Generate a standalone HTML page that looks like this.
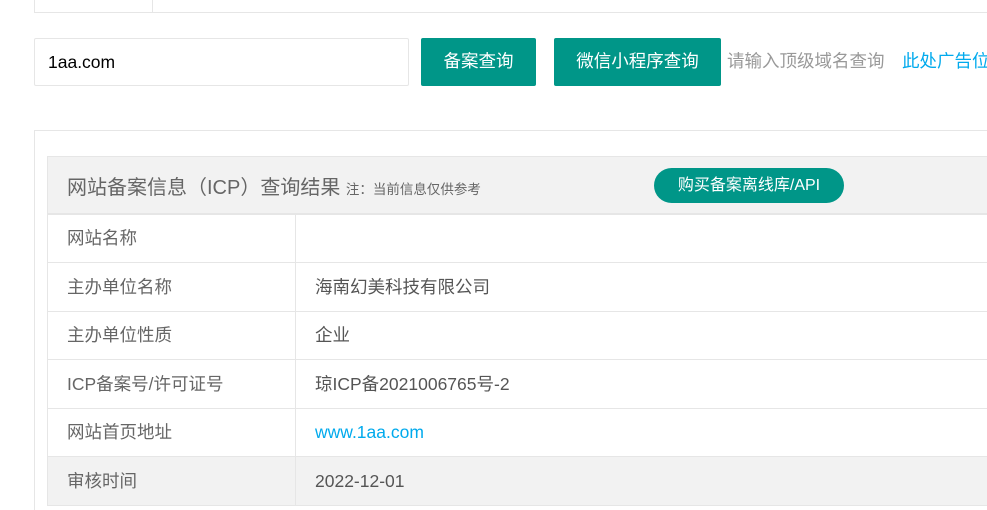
<!DOCTYPE html>
<html><head><meta charset="utf-8"><style>
*{margin:0;padding:0;box-sizing:border-box}
html,body{width:987px;height:510px;overflow:hidden}
body{background:#fff;font-family:"Liberation Sans","Noto Sans CJK SC",sans-serif;position:relative}
.abs{position:absolute}
.top{left:34px;top:-2px;width:953px;height:15px;border:1px solid #e6e6e6;border-top:none;border-right:none}
.topdiv{left:152px;top:0;width:1px;height:13px;background:#e6e6e6}
.inp{left:34px;top:38px;width:375px;height:48px;border:1px solid #e6e6e6;border-radius:2px;font-size:17.5px;color:#000;padding-left:13px;line-height:46px}
.btn{top:38px;height:48px;background:#009688;color:#fff;font-size:17.5px;line-height:46px;text-align:center;border-radius:2px;white-space:nowrap}
.hint{top:38px;line-height:46px;font-size:17.5px;color:#999;left:727px;white-space:nowrap}
.ad{top:38px;line-height:46px;font-size:17.5px;color:#01aaed;left:902px;white-space:nowrap}
.card{left:34px;top:130px;width:953px;height:380px;border:1px solid #e6e6e6;border-right:none;border-bottom:none}
table{position:absolute;left:47px;top:156px;width:940px;border-collapse:collapse}
td{border:1px solid #e6e6e6;border-right:none;height:48.5px;font-size:17.5px;color:#666;padding-left:19px;line-height:20px;vertical-align:middle;white-space:nowrap}
td.v{color:#555}
tr.g td{background:#f2f2f2}
.hd{left:47px;top:156px;width:940px;height:58px;background:#f2f2f2;border:1px solid #e6e6e6;border-right:none}
.title{left:67px;top:171px;font-size:20px;color:#666;white-space:nowrap}
.title small{font-size:13.5px;color:#666}
.pill{left:654px;top:168px;width:190px;height:35px;border-radius:18px;background:#009688;color:#fff;font-size:16px;text-align:center;line-height:35px;white-space:nowrap}
</style></head><body>
<div class="abs top"></div><div class="abs topdiv"></div>
<div class="abs inp">1aa.com</div>
<div class="abs btn" style="left:421px;width:115px">备案查询</div>
<div class="abs btn" style="left:554px;width:167px">微信小程序查询</div>
<div class="abs hint">请输入顶级域名查询</div>
<div class="abs ad">此处广告位</div>
<div class="abs card"></div>
<table>
<tr><td style="height:58px;border:none" colspan="2"></td></tr>
<tr><td style="width:248px;border-right:1px solid #e6e6e6">网站名称</td><td class="v"></td></tr>
<tr><td style="border-right:1px solid #e6e6e6">主办单位名称</td><td class="v">海南幻美科技有限公司</td></tr>
<tr><td style="border-right:1px solid #e6e6e6">主办单位性质</td><td class="v">企业</td></tr>
<tr><td style="border-right:1px solid #e6e6e6">ICP备案号/许可证号</td><td class="v">琼ICP备2021006765号-2</td></tr>
<tr><td style="border-right:1px solid #e6e6e6">网站首页地址</td><td class="v" style="color:#01aaed">www.1aa.com</td></tr>
<tr class="g"><td style="border-right:1px solid #e6e6e6">审核时间</td><td class="v">2022-12-01</td></tr>
</table>
<div class="abs hd"></div>
<div class="abs title">网站备案信息（ICP）查询结果 <small>注：当前信息仅供参考</small></div>
<div class="abs pill">购买备案离线库/API</div>
</body></html>
